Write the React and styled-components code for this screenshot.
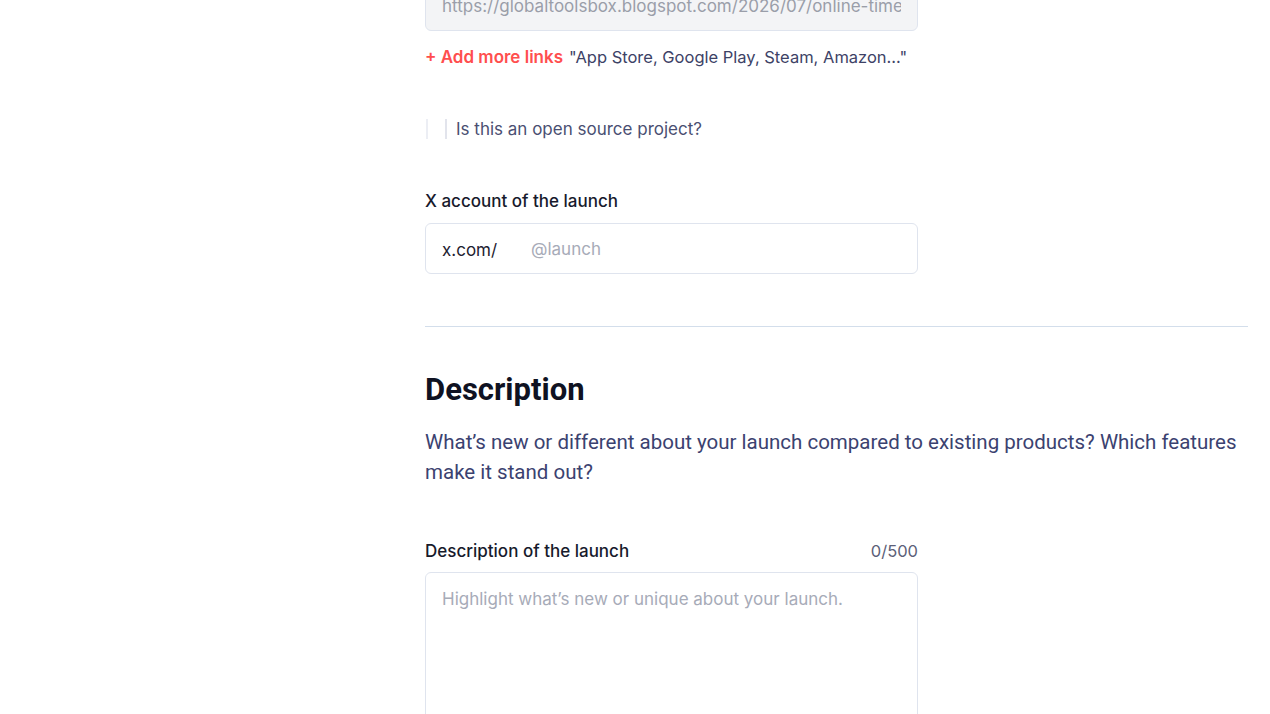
import React, { useState } from "react";
import styled, { createGlobalStyle } from "styled-components";

const GlobalStyle = createGlobalStyle`
  * { box-sizing: border-box; }
  body {
    margin: 0;
    background: #ffffff;
    font-family: Inter, "Noto Sans", sans-serif;
    overflow: hidden;
  }
`;

const App = () => {
  const [handle, setHandle] = useState(""); // X handle input
  const [description, setDescription] = useState(""); // launch description
  const [openSource, setOpenSource] = useState(false);

  return (
    <Page>
      <GlobalStyle />
      <Column>
        {/* Link field, partly scrolled out of view */}
        <DisabledInput
          value="https://globaltoolsbox.blogspot.com/2026/07/online-time-zone-converter"
          readOnly
        />
        <MoreLinks>
          <AddLink>+ Add more links</AddLink>
          <Hint>"App Store, Google Play, Steam, Amazon..."</Hint>
        </MoreLinks>

        <CheckRow onClick={() => setOpenSource(!openSource)}>
          <CheckBox checked={openSource} />
          <CheckText>Is this an open source project?</CheckText>
        </CheckRow>

        <Field>
          <Label>X account of the launch</Label>
          <PrefixInput>
            <Prefix>x.com/</Prefix>
            <PlainInput
              value={handle}
              onChange={(e) => setHandle(e.target.value)}
              placeholder="@launch"
            />
          </PrefixInput>
        </Field>

        <Divider />

        <Section>
          <Heading>Description</Heading>
          <Lead>
            What’s new or different about your launch compared to existing
            products? Which features make it stand out?
          </Lead>
        </Section>

        <DescField>
          <LabelRow>
            <Label>Description of the launch</Label>
            <Counter>{description.length}/500</Counter>
          </LabelRow>
          <TextArea
            value={description}
            maxLength={500}
            onChange={(e) => setDescription(e.target.value)}
            placeholder="Highlight what’s new or unique about your launch."
          />
        </DescField>
      </Column>
    </Page>
  );
};

export default App;

// Styled components
const Page = styled.div`
  width: 100%;
  height: 714px;
  overflow: hidden;
  padding: 0 22px 0 425px;
`;

const Column = styled.div`
  display: flex;
  flex-direction: column;
  margin-top: -20px;
`;

const DisabledInput = styled.input`
  width: 493px;
  height: 51px;
  padding: 0 16px;
  border: 1px solid #dfe4ee;
  border-radius: 6px;
  background: #f3f4f6;
  color: #9a9ea9;
  font-family: Inter, sans-serif;
  font-size: 17px;
  outline: none;
`;

const MoreLinks = styled.div`
  display: flex;
  align-items: center;
  gap: 6px;
  margin-top: 16px;
  line-height: 20px;
  font-size: 17px;
`;

const AddLink = styled.span`
  color: #ff4e4e;
  font-weight: 600;
  cursor: pointer;
`;

const Hint = styled.span`
  color: #3d4266;
  font-size: 16.5px;
`;

const CheckRow = styled.label`
  display: flex;
  align-items: center;
  gap: 9px;
  margin-top: 52px;
  height: 20px;
  cursor: pointer;
`;

const CheckBox = styled.span`
  width: 21px;
  height: 20px;
  margin-left: 1px;
  border-left: 2px solid #eceef4;
  border-right: 2px solid #e2e4ec;
  background: ${({ checked }) => (checked ? "#ff4e4e" : "transparent")};
`;

const CheckText = styled.span`
  font-size: 17px;
  color: #4a4f72;
`;

const Field = styled.div`
  display: flex;
  flex-direction: column;
  gap: 12px;
  margin-top: 52px;
`;

const DescField = styled(Field)`
  margin-top: 54px;
  gap: 11px;
  width: 493px;
`;

const Label = styled.span`
  font-size: 17px;
  line-height: 20px;
  font-weight: 500;
  color: #171a2c;
`;

const LabelRow = styled.div`
  display: flex;
  justify-content: space-between;
  align-items: center;
`;

const Counter = styled.span`
  font-size: 16.5px;
  line-height: 20px;
  color: #5c6078;
`;

const PrefixInput = styled.div`
  display: flex;
  align-items: center;
  width: 493px;
  height: 51px;
  padding: 0 16px;
  border: 1px solid #dfe4ee;
  border-radius: 6px;
  background: #ffffff;
`;

const Prefix = styled.span`
  width: 89px;
  font-size: 17px;
  color: #1e2130;
  padding-top: 2px;
`;

const PlainInput = styled.input`
  flex: 1;
  border: none;
  outline: none;
  font-family: Inter, sans-serif;
  font-size: 17px;
  color: #1e2130;
  padding: 0;

  &::placeholder {
    color: #a7abb8;
  }
`;

const Divider = styled.hr`
  width: 100%;
  margin: 52px 0 0;
  border: none;
  border-top: 1px solid #d3deeb;
`;

const Section = styled.div`
  display: flex;
  flex-direction: column;
  gap: 19px;
  margin-top: 45px;
  font-family: Roboto, sans-serif;
`;

const Heading = styled.h2`
  margin: 0;
  font-size: 31px;
  line-height: 36px;
  font-weight: 700;
  color: #0f1222;
`;

const Lead = styled.p`
  margin: 0;
  font-size: 20.5px;
  line-height: 30px;
  color: #3b4270;
`;

const TextArea = styled.textarea`
  width: 493px;
  height: 200px;
  padding: 15px 16px;
  border: 1px solid #dfe4ee;
  border-radius: 6px;
  resize: none;
  outline: none;
  font-family: Inter, sans-serif;
  font-size: 17px;
  line-height: 22px;
  color: #1e2130;

  &::placeholder {
    color: #a7abb8;
  }
`;
